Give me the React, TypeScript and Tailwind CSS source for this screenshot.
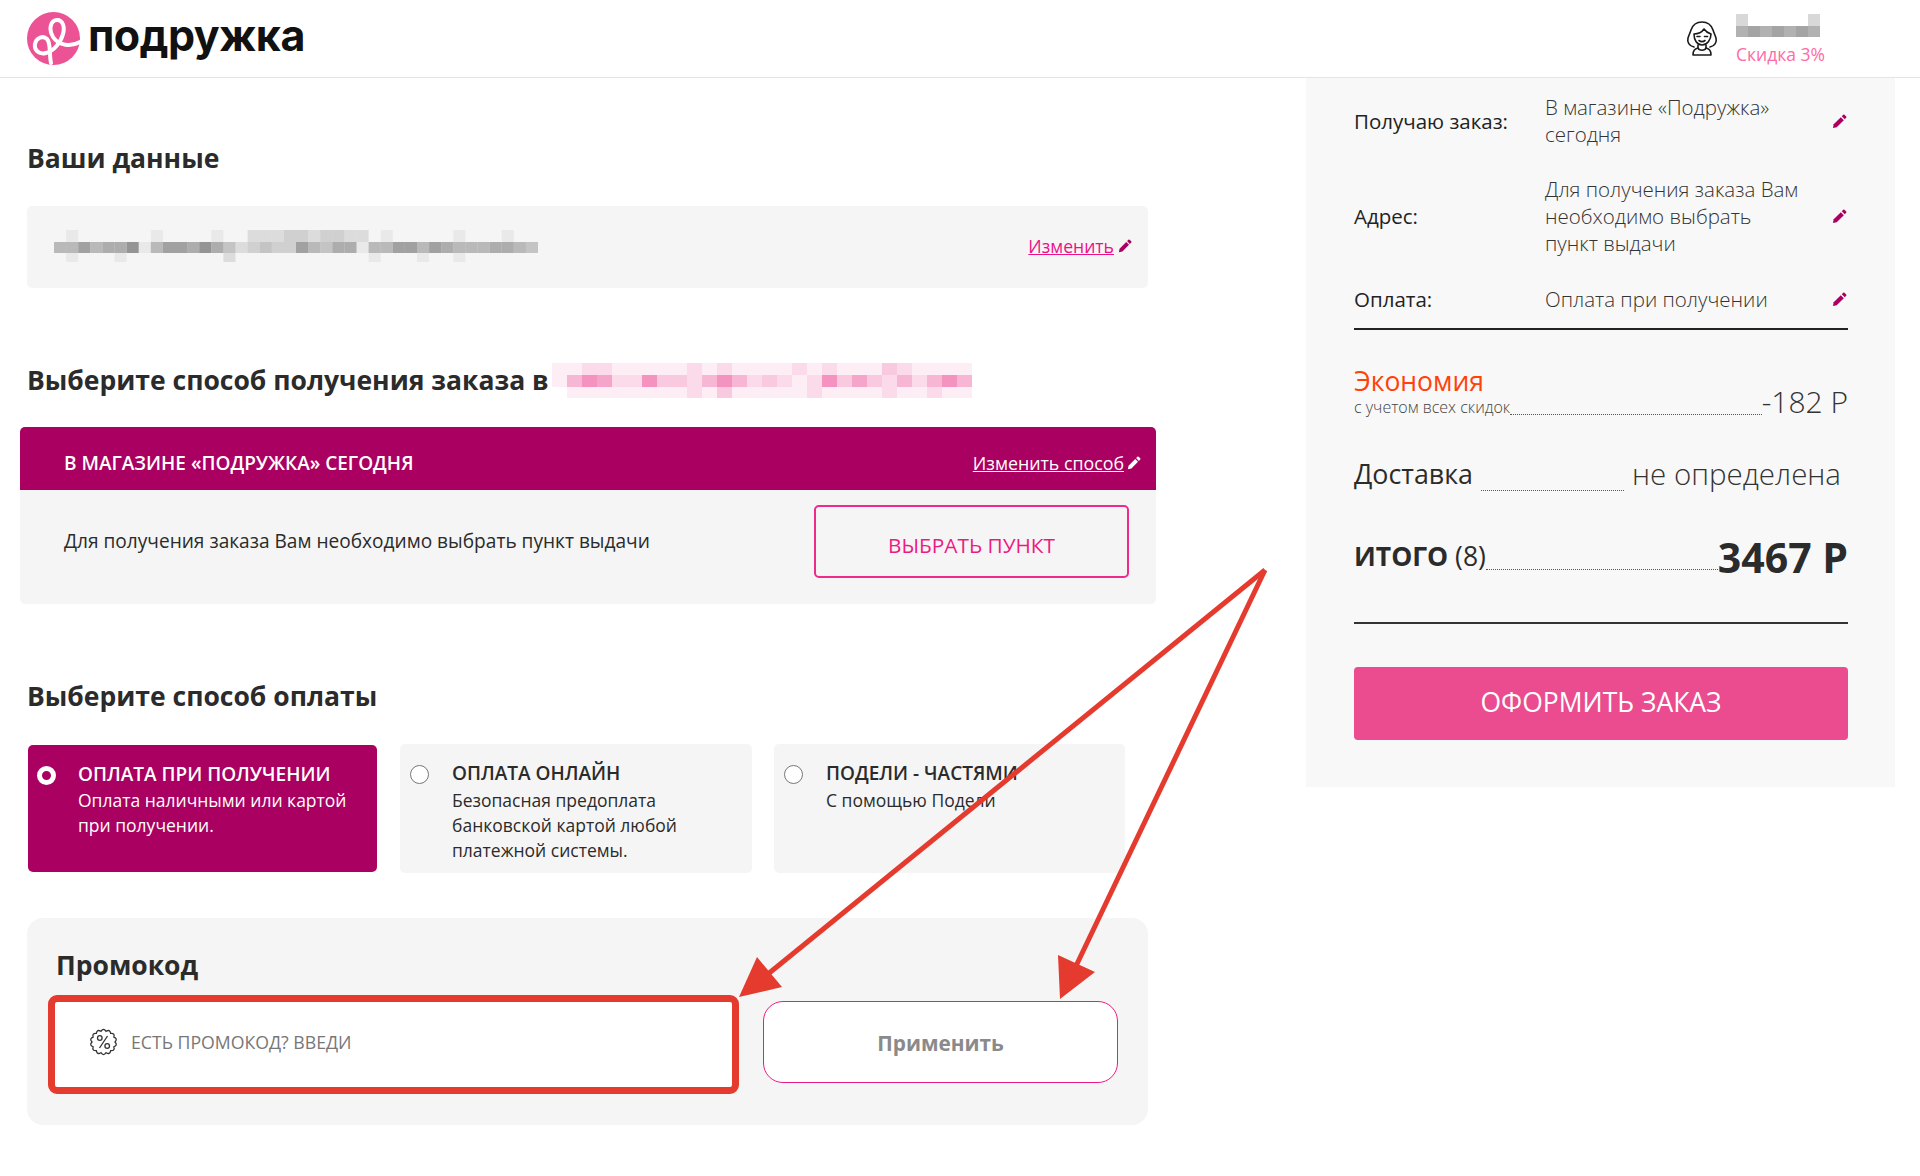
const font = "font-['Open_Sans',sans-serif]";

function Pencil({ className }: { className: string }) {
  return (
    <svg viewBox="0 0 16 16" className={className} fill="currentColor" aria-hidden="true">
      <path d="M1 15l.8-4 7.6-7.6 3.2 3.2L5 14.200z" />
      <path d="M10.400 2.400l1.500-1.500a1 1 0 0 1 1.400 0l1.800 1.800a1 1 0 0 1 0 1.400l-1.500 1.500z" />
    </svg>
  );
}

// blurred-out personal data: each digit is the strength of one mosaic cell
function Mosaic({
  rows,
  cell,
  heights,
  color,
  className,
}: {
  rows: string[];
  cell: number;
  heights: number[];
  color: string;
  className: string;
}) {
  const width = Math.max(...rows.map((r) => r.length)) * cell;
  const height = heights.reduce((a, b) => a + b, 0);
  let y = 0;
  return (
    <svg width={width} height={height} className={className} aria-hidden="true">
      {rows.map((row, r) => {
        const top = y;
        y += heights[r];
        return row
          .split("")
          .map((c, i) =>
            c === "0" ? null : (
              <rect key={`${r}-${i}`} x={i * cell} y={top} width={cell} height={heights[r]} fill={color} opacity={Number(c) / 9} />
            ),
          );
      })}
    </svg>
  );
}

function Logo() {
  return (
    <div className="flex items-center">
      <svg width="53" height="53" viewBox="0 0 53 53" className="shrink-0" aria-hidden="true">
        <circle cx="26.500" cy="26.500" r="26.500" fill="#ec5395" />
        <path
          d="M53 30C44 35 32 34 26 25C21 17 24 8 30 8C36 8 38 15 36 22C34 30 27 39 19 41C12 43 7 38 8 32C9 26 16 23 20 27C24 31 22 42 24 51"
          fill="none"
          stroke="#fff"
          strokeWidth="4"
          strokeLinecap="round"
        />
      </svg>
      <span className="mt-[-6px] ml-[8px] font-['Inter',sans-serif] text-[43px] leading-none font-bold tracking-[-0.5px] text-[#111]">подружка</span>
    </div>
  );
}

function WomanIcon() {
  return (
    <svg width="32" height="35" viewBox="0 0 32 35" fill="none" stroke="#1a1a1a" strokeWidth="1.600" strokeLinejoin="round" strokeLinecap="round" aria-hidden="true">
      <path d="M8 26C3 25 1 21 2 17C3 14 4 12 5 9C7 3 12 1 16 1C20 1 25 3 27 9C28 12 29 14 30 17C31 21 29 25 24 26" />
      <path d="M8 13C12 13 16 11 18 8C20 11 22 12 25 13C25 19 21 24 16 24C11 24 8 19 8 13z" />
      <path d="M12 24V27C9 28 7 29 7 34H25C25 29 23 28 20 27V24" />
      <path d="M12 27C13 30 19 30 20 27" />
      <path d="M11 15.500h3M18.500 15.500h3M13 19.500C15 21 17 21 19 19.500" />
    </svg>
  );
}

// scalloped badge outline, 14 bumps around a circle
function scallopPath(cx: number, cy: number, rx: number, ry: number) {
  const n = 14;
  let d = "";
  for (let i = 0; i <= n; i++) {
    const a = (i / n) * Math.PI * 2;
    const x = cx + rx * Math.cos(a);
    const y = cy + ry * Math.sin(a);
    if (i === 0) {
      d += `M${x.toFixed(2)} ${y.toFixed(2)}`;
    } else {
      const m = ((i - 0.5) / n) * Math.PI * 2;
      const qx = cx + (rx + 3.4) * Math.cos(m);
      const qy = cy + (ry + 3.4) * Math.sin(m);
      d += `Q${qx.toFixed(2)} ${qy.toFixed(2)} ${x.toFixed(2)} ${y.toFixed(2)}`;
    }
  }
  return d + "z";
}

function PromoIcon() {
  return (
    <svg width="29" height="28" viewBox="0 0 29 28" fill="none" stroke="#333" strokeWidth="1.300" className="shrink-0" aria-hidden="true">
      <path d={scallopPath(14.5, 14, 11.5, 11)} />
      <path d="M18.500 8L10.500 20" />
      <circle cx="10.800" cy="10" r="2.300" />
      <circle cx="18.200" cy="18" r="2.300" />
    </svg>
  );
}

function Heading({ children, className }: { children: React.ReactNode; className: string }) {
  return <h2 className={`text-[26.500px] leading-[36px] font-bold text-[#2b2b2b] ${className}`}>{children}</h2>;
}

function SummaryRow({ label, lines }: { label: string; lines: string[] }) {
  return (
    <div className="flex items-center">
      <div className="w-[191px] shrink-0 text-[20.500px] text-[#222]">{label}</div>
      <div className="flex-1 text-[20.500px] leading-[27px] font-light text-[#333]">
        {lines.map((l) => (
          <div key={l}>{l}</div>
        ))}
      </div>
      <Pencil className="mr-[1px] size-[15px] shrink-0 text-[#aa0061]" />
    </div>
  );
}

function PayCard({
  active,
  title,
  lines,
  className,
}: {
  active?: boolean;
  title: string;
  lines: string[];
  className: string;
}) {
  return (
    <div className={`flex rounded-[5px] pt-[17px] ${active ? "bg-[#aa0061] text-white" : "bg-[#f5f5f5] text-[#2b2b2b]"} ${className}`}>
      <div className={`mt-[4px] size-[19px] shrink-0 rounded-full ${active ? "border-[5px] border-white bg-[#aa0061]" : "border border-[#777] bg-white"}`} />
      <div className={active ? "ml-[22px]" : "ml-[23px]"}>
        <div className="text-[19px] leading-[25px] font-semibold">{title}</div>
        <div className={`text-[17.500px] leading-[25px] ${active ? "mt-px" : "mt-[2px]"}`}>
          {lines.map((l) => (
            <div key={l}>{l}</div>
          ))}
        </div>
      </div>
    </div>
  );
}

function Arrows() {
  return (
    <svg width="1920" height="1176" className="pointer-events-none absolute top-0 left-0" aria-hidden="true">
      <g stroke="#e53a2e" strokeWidth="5" fill="none">
        <path d="M1265 570L768 974" />
        <path d="M1265 570L1076 966" />
      </g>
      <g fill="#e53a2e">
        <path d="M739 997L757 957L782 987z" />
        <path d="M1060 999L1058 955L1095 972z" />
      </g>
    </svg>
  );
}

export default function App() {
  return (
    <div className={`relative h-[1176px] w-[1920px] overflow-hidden bg-white ${font}`}>
      <header className="flex h-[78px] items-center border-b border-[#e4e4e4] pl-[27px]">
        <Logo />
        <div className="ml-auto flex items-center gap-[18px] pr-[94px]">
          <WomanIcon />
          <div className="w-[90px]">
            <Mosaic rows={["3000003", "6767676"]} cell={12} heights={[12, 11]} color="#8a8a8a" className="mt-[2px]" />
            <div className="mt-[6px] text-[17.500px] leading-[22px] whitespace-nowrap text-[#ff6ba8]">Скидка 3%</div>
          </div>
        </div>
      </header>

      <main className="flex justify-between">
        <div className="w-[1156px] pl-[27px]">
          <Heading className="mt-[62px]">Ваши данные</Heading>
          <div className="mt-[30px] flex h-[82px] w-[1121px] items-center justify-between rounded-[5px] bg-[#f5f5f5] pr-[16px] pl-[27px]">
            <Mosaic
              rows={[
                "0100000010000100222332332201000001000100",
                "5575668157768642343375466155775765556654",
                "0100010000000020000000000010001001000000",
              ]}
              cell={12.100}
              heights={[12, 11, 9]}
              color="#888"
              className="mt-[-2px]"
            />
            <div className="mt-[-2px] flex items-center gap-[4px]">
              <a className="text-[17.600px] text-[#ee0f8a] underline">Изменить</a>
              <Pencil className="size-[14px] text-[#aa0061]" />
            </div>
          </div>

          <Heading className="mt-[74px] flex items-center whitespace-nowrap">
            <span>Выберите способ получения заказа в</span>
            <Mosaic
              rows={["1122111112121111212111321111", "1465226332464232126353242464", "0111111112131111121111211211"]}
              cell={15}
              heights={[12, 12, 11]}
              color="#ee5d9f"
              className="ml-[3px]"
            />
          </Heading>

          <div className="mt-[29px] -ml-[7px] w-[1136px]">
            <div className="flex h-[63px] items-center justify-between rounded-t-[5px] bg-[#aa0061] pt-[9px] pr-[15px] pl-[44px] text-white">
              <span className="text-[19px] font-semibold">В МАГАЗИНЕ «ПОДРУЖКА» СЕГОДНЯ</span>
              <span className="flex items-center gap-[3px]">
                <a className="text-[17.800px] underline">Изменить способ</a>
                <Pencil className="size-[14px]" />
              </span>
            </div>
            <div className="flex h-[114px] justify-between rounded-b-[5px] bg-[#f5f5f5] pt-[15px] pr-[27px] pl-[44px]">
              <p className="mt-[23px] text-[19.100px] leading-[26px] text-[#2b2b2b]">Для получения заказа Вам необходимо выбрать пункт выдачи</p>
              <button className="h-[73px] w-[315px] rounded-[5px] border-2 border-[#ee2a8c] bg-[#f5f5f5] pt-[8px] text-[20.800px] text-[#ee1a84]">ВЫБРАТЬ ПУНКТ</button>
            </div>
          </div>

          <Heading className="mt-[74px]">Выберите способ оплаты</Heading>

          <div className="mt-[30px] flex h-[129px] items-center">
            <PayCard active title="ОПЛАТА ПРИ ПОЛУЧЕНИИ" lines={["Оплата наличными или картой", "при получении."]} className="ml-px h-[127px] w-[349px] pl-[9px]" />
            <PayCard title="ОПЛАТА ОНЛАЙН" lines={["Безопасная предоплата", "банковской картой любой", "платежной системы."]} className="ml-[23px] h-[129px] w-[352px] pl-[10px]" />
            <PayCard title="ПОДЕЛИ - ЧАСТЯМИ" lines={["С помощью Подели"]} className="ml-[22px] h-[129px] w-[351px] pl-[10px]" />
          </div>

          <section className="mt-[45px] h-[207px] w-[1121px] rounded-[16px] bg-[#f5f5f5] pt-[29px] pl-[21px]">
            <h2 className="pl-[8px] text-[26.500px] leading-[36px] font-bold text-[#2b2b2b]">Промокод</h2>
            <div className="mt-[12px] flex items-center">
              <div className="flex h-[99px] w-[691px] items-center rounded-[9px] border-[7px] border-[#e53a2e] bg-white pb-[5px] pl-[34px]">
                <PromoIcon />
                <span className="ml-[13px] text-[17.700px] text-[#777]">ЕСТЬ ПРОМОКОД? ВВЕДИ</span>
              </div>
              <button className="mb-[5px] ml-[24px] h-[82px] w-[355px] rounded-[20px] border-[1.500px] border-[#ee1a84] bg-white pt-[3px] text-[20.800px] font-bold text-[#8a8a8a]">Применить</button>
            </div>
          </section>
        </div>

        <aside className="mr-[25px] h-[709px] w-[589px] bg-[#f8f8f8] pt-[16px] pr-[47px] pl-[48px]">
          <SummaryRow label="Получаю заказ:" lines={["В магазине «Подружка»", "сегодня"]} />
          <div className="mt-[28px]">
            <SummaryRow label="Адрес:" lines={["Для получения заказа Вам", "необходимо выбрать", "пункт выдачи"]} />
          </div>
          <div className="mt-[27px]">
            <SummaryRow label="Оплата:" lines={["Оплата при получении"]} />
          </div>
          <div className="mt-[13px] h-[2px] bg-[#222]" />

          <div className="mt-[36px] flex items-end">
            <div className="shrink-0">
              <div className="text-[26.500px] leading-[30px] text-[#ff4208]">Экономия</div>
              <div className="text-[16px] leading-[22px] font-light text-[#444]">с учетом всех скидок</div>
            </div>
            <div className="mb-[3px] flex-1 border-b border-dotted border-[#555]" />
            <div className="mb-[-5px] text-[30px] leading-[42px] font-light text-[#333]">-182 Р</div>
          </div>

          <div className="mt-[36px] flex items-end">
            <div className="text-[26.800px] leading-[40px] text-[#2b2b2b]">Доставка</div>
            <div className="mx-[8px] mb-[3px] flex-1 border-b border-dotted border-[#555]" />
            <div className="pr-[7px] text-[29.500px] leading-[40px] font-light text-[#333]">не определена</div>
          </div>

          <div className="mt-[37px] flex items-end">
            <div className="text-[26.500px] leading-[40px] font-bold text-[#2b2b2b]">
              ИТОГО <span className="font-normal">(8)</span>
            </div>
            <div className="mb-[6px] flex-1 border-b border-dotted border-[#555]" />
            <div className="mb-[-7px] text-[41px] leading-[52px] font-bold text-[#2b2b2b]">3467 Р</div>
          </div>

          <div className="mt-[46px] h-[2px] bg-[#333]" />

          <button className="mt-[43px] h-[73px] w-full rounded-[4px] bg-[#ea4c8f] text-[26.500px] text-white">ОФОРМИТЬ ЗАКАЗ</button>
        </aside>
      </main>

      <Arrows />
    </div>
  );
}
